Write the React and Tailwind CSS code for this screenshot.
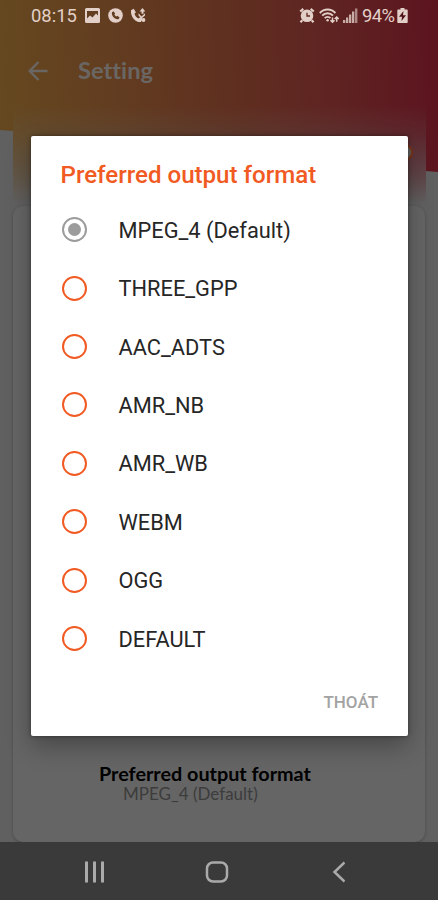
import React, { useState } from "react";

const formats = [
  "MPEG_4 (Default)",
  "THREE_GPP",
  "AAC_ADTS",
  "AMR_NB",
  "AMR_WB",
  "WEBM",
  "OGG",
  "DEFAULT",
];

function StatusBar() {
  return (
    <div className="flex h-8 items-center justify-between pl-[31px] pr-[30px] font-[Roboto,sans-serif] text-[18.4px] text-[#e2cfc8]">
      <div className="flex items-center">
        <span className="w-[46px]">08:15</span>
        <svg className="ml-[8px]" width="15" height="15" viewBox="0 0 15 15">
          <path
            fill="currentColor"
            fillRule="evenodd"
            d="M1.5 0h12A1.5 1.5 0 0 1 15 1.5v12a1.5 1.5 0 0 1-1.5 1.5h-12A1.5 1.5 0 0 1 0 13.5v-12A1.5 1.5 0 0 1 1.5 0zM2 3v7.5l3-3 2.5 2L11 5.5l2 2V3z"
          />
        </svg>
        <svg className="ml-[8px]" width="15" height="15" viewBox="0 0 15 15">
          <circle cx="7.5" cy="7.5" r="7.3" fill="currentColor" />
          <path
            fill="#613d20"
            d="M4 4.3l1.5-1 1.6 2.3-.6.9c.4 1 1 1.6 2 2l.9-.7 2.2 1.6-.9 1.5C7.5 12.2 3 8 4 4.3z"
          />
        </svg>
        <svg className="ml-[8px]" width="15" height="15" viewBox="0 0 15 15" fill="currentColor">
          <path d="M0 2.2L2.7.8l2.2 3.4-1.4 1.5c.6 2.3 2.1 3.8 4.2 4.7l1.6-1.3 2.2 1.6-1.5 3.2C5 15.2-.8 8.8 0 2.2z" />
          <path d="M11.5 0l2.8 3.6h-1.8v2.2h-2V3.6H8.5z" />
          <path d="M7.5 5.2l3 3.3 3.5-3.3v2.2l-3.5 3.2-3-3z" />
          <circle cx="12.5" cy="12" r="1.9" />
        </svg>
      </div>
      <div className="flex items-center">
        <svg width="16" height="15" viewBox="0 0 15 15">
          <circle cx="7.5" cy="7.7" r="6.3" fill="currentColor" />
          <path
            d="M.7 3.5L3.8.9M14.3 3.5L11.2.9M2.8 12.2L1 14.3M12.2 12.2l1.8 2.1"
            stroke="currentColor"
            strokeWidth="2.2"
          />
          <path d="M10.5 8H7.5V4.8" fill="none" stroke="#602920" strokeWidth="1.3" />
        </svg>
        <svg className="ml-[4px]" width="20" height="16" viewBox="0 0 20 16" fill="none" stroke="currentColor">
          <path d="M.8 5C5 .3 12.2.3 16.4 5M3.2 7.7c3-3.3 7.8-3.3 10.8 0" strokeWidth="1.9" />
          <path d="M5.7 10.2c1.6-1.7 4.2-1.7 5.8 0" strokeWidth="1.7" />
          <circle cx="8.6" cy="12.2" r="1.2" fill="currentColor" stroke="none" />
          <path d="M13.5 9.5v4.8M11.5 12.3l2 2 2-2M17.7 13.8V9M15.7 11l2-2 2 2" strokeWidth="1.5" />
        </svg>
        <svg className="ml-[4px]" width="15" height="15" viewBox="0 0 15 15" fill="currentColor">
          <path d="M0 12h2.3v3H0zM3 9.5h2.3V15H3zM6 6.5h2.3V15H6zM9 3.5h2.3V15H9z" opacity=".8" />
          <path d="M12 .5h2.4V15H12z" opacity=".6" />
        </svg>
        <span className="ml-[4px] w-[35px] whitespace-nowrap tracking-[-0.6px]">94%</span>
        <svg width="11" height="15" viewBox="0 0 11 15">
          <path
            fill="currentColor"
            d="M3.5 0h4v1.5h2.2c.6 0 1 .4 1 1V14c0 .6-.4 1-1 1H1.3c-.6 0-1-.4-1-1V2.500c0-.6.4-1 1-1h2.2z"
          />
          <path fill="#4d1219" d="M6.5 3L2 8.8h3L4.5 13 9 7.2H6z" />
        </svg>
      </div>
    </div>
  );
}

function HeaderBackground() {
  return (
    <svg className="absolute left-0 top-0" width="438" height="240" viewBox="0 0 438 240">
      <defs>
        <linearGradient id="header" gradientUnits="userSpaceOnUse" x1="0" y1="60" x2="438" y2="40">
          <stop offset="0" stopColor="#65481f" />
          <stop offset=".25" stopColor="#623d20" />
          <stop offset=".5" stopColor="#5f301f" />
          <stop offset=".75" stopColor="#5f2422" />
          <stop offset="1" stopColor="#5c141f" />
        </linearGradient>
        <linearGradient id="haze" x1="0" y1="0" x2="0" y2="1">
          <stop offset="0" stopColor="#606060" stopOpacity="0" />
          <stop offset=".3" stopColor="#606060" stopOpacity=".22" />
          <stop offset=".7" stopColor="#606060" stopOpacity=".6" />
          <stop offset="1" stopColor="#606060" />
        </linearGradient>
      </defs>
      <path fill="url(#header)" d="M0 0h438v172l-12-1v31H13v-71l-13-1z" />
      <path fill="url(#haze)" d="M13 106h413v98H13z" />
    </svg>
  );
}

function SettingScreen({ selected }) {
  return (
    <div className="relative flex h-[842px] flex-col overflow-hidden bg-[#606060]">
      <HeaderBackground />
      <div className="relative">
        <StatusBar />
        <div className="flex h-[78px] items-center pl-[28px]">
          <svg width="20" height="20" viewBox="0 0 20 20" fill="none" stroke="#6a6663" strokeWidth="2.4">
            <path d="M19.5 10H2M10.5 1L1.7 10l8.8 9" />
          </svg>
          <h1 className="ml-[30px] font-[Lato,sans-serif] text-[23.7px] font-bold text-[#6a6663] [font-variant-ligatures:none]">
            Setting
          </h1>
        </div>
      </div>
      <div className="relative flex h-[70px] items-center justify-end pr-[25px]">
        <span className="mt-[14px] h-[17px] w-[17px] rounded-full border-2 border-[#7a3518] bg-[#656565]" />
      </div>
      <div className="relative mx-[13px] mt-[26px] flex flex-1 flex-col justify-end rounded-[10px] bg-[#656565] pb-[39px] font-[Lato,sans-serif] shadow-[0_1px_3px_rgba(0,0,0,0.25)]">
        <p className="pl-[86px] text-[19.8px] font-bold leading-[22px] text-black">Preferred output format</p>
        <p className="pl-[110px] text-[17px] leading-[19px] text-[#3c3c3c]">{selected}</p>
      </div>
    </div>
  );
}

function FormatDialog({ selected, onSelect }) {
  return (
    <div className="absolute left-[31px] top-[136px] flex h-[600px] w-[377px] flex-col rounded-[2px] bg-white font-[Roboto,sans-serif] shadow-[0_10px_24px_rgba(0,0,0,0.3),0_0_4px_rgba(0,0,0,0.4)]">
      <h2 className="h-[64.5px] whitespace-nowrap pl-[29.5px] pt-[23px] text-[24.1px] font-medium leading-[32px] text-[#f15a22]">
        Preferred output format
      </h2>
      <div className="flex flex-col">
        {formats.map((format) => (
          <button
            key={format}
            onClick={() => onSelect(format)}
            className="flex h-[58.4px] items-center pl-[31px] text-left text-[21.8px] text-[#262626]"
          >
            {format === selected ? (
              <span className="flex h-[25px] w-[25px] items-center justify-center rounded-full border-2 border-[#9c9c9c]">
                <span className="h-[13px] w-[13px] rounded-full bg-[#9c9c9c]" />
              </span>
            ) : (
              <span className="h-[25px] w-[25px] rounded-full border-[2.5px] border-[#f15a22]" />
            )}
            <span className="ml-[31.5px] whitespace-nowrap pt-[3px]">{format}</span>
          </button>
        ))}
      </div>
      <button className="mr-[30px] mt-[22px] self-end text-[17px] font-medium leading-[24px] text-[#a3a3a3]">
        THOÁT
      </button>
    </div>
  );
}

function NavigationBar() {
  return (
    <div className="flex h-[58px] items-center bg-[#3a3a3a] pt-[1px]">
      <svg className="ml-[84px]" width="22" height="22" viewBox="0 0 22 22" stroke="#aaa" strokeWidth="3">
        <path d="M2.5 .5v21M10.5 .5v21M18.5 .5v21" />
      </svg>
      <svg className="ml-[99px]" width="24" height="24" viewBox="0 0 24 24" fill="none" stroke="#aaa" strokeWidth="2.5">
        <rect x="2" y="2.5" width="20" height="19" rx="6" />
      </svg>
      <svg className="ml-[103px]" width="13" height="22" viewBox="0 0 13 22" fill="none" stroke="#aaa" strokeWidth="2.5">
        <path d="M12.5 1.5L2.5 11l10 9.5" />
      </svg>
    </div>
  );
}

export default function App() {
  const [selected, setSelected] = useState(formats[0]);

  return (
    <div className="relative h-[900px] w-[438px] overflow-hidden">
      <SettingScreen selected={selected} />
      <NavigationBar />
      <FormatDialog selected={selected} onSelect={setSelected} />
    </div>
  );
}
